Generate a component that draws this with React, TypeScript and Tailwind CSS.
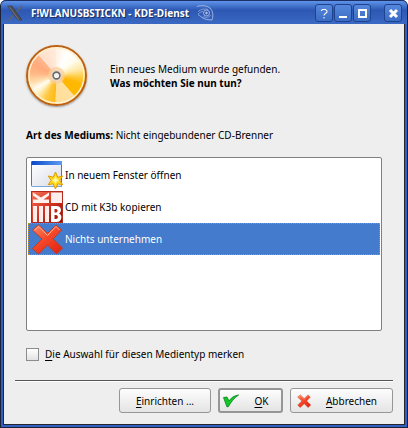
import { ReactNode, useState } from 'react';

interface Action {
  id: string;
  label: string;
  icon: ReactNode;
}

function XLogo() {
  return (
    <svg viewBox="0 0 16 16" className="size-4" aria-hidden="true">
      <path d="M.5 1h4.500l10 14h-4z" fill="#4c4e56" stroke="#353945" strokeWidth=".6" />
      <path d="M15 1 9.500 7M6.500 10 1.500 15.500" stroke="#5f626c" strokeWidth="1.800" fill="none" />
      <path d="M2 1.500 12 15" stroke="#75767c" strokeWidth="1" />
    </svg>
  );
}

function Swirl() {
  return (
    <svg viewBox="0 0 18 18" className="size-[18px]" fill="none" stroke="#9fb4e0" strokeWidth="1" aria-hidden="true">
      <path d="M0 2.500C4 1 10 1.500 13 4c3 3 3.500 8 2 12-4 0-8-1-10-2.500C3 12 2 11 1 10.500" />
      <path d="M1 7.500C4 5 8 4.500 11 5.500M1 10c2-2 4-2.500 5-2.500" stroke="#7f9bd4" />
      <circle cx="9.500" cy="9" r="3" />
      <circle cx="9.500" cy="9" r=".8" fill="#b9c9ea" stroke="#b9c9ea" />
      <path d="M6 12.500c3 1.500 6 1 8-1.500" stroke="#7f9bd4" />
    </svg>
  );
}

function Disc() {
  return (
    <div className="relative size-[61px] shrink-0 rounded-full border-2 border-[#bd6212] bg-[conic-gradient(#fff3e4_0deg,#ffffff_25deg,#fffdf0_50deg,#ffe9a8_75deg,#ffc93c_95deg,#ffb700_110deg,#ffb800_137deg,#ffe0a0_140deg,#ffdf98_181deg,#ffba18_184deg,#ffc840_205deg,#fff3c8_228deg,#fffdf4_238deg,#ffe0b0_252deg,#ffb886_275deg,#ffaa7a_295deg,#ffb68c_317deg,#ffdfca_320deg,#ffeadb_357deg,#fff3e4_360deg)] shadow-[0_1px_2px_#55555599]">
      <svg viewBox="0 0 57 57" className="size-full" fill="none" aria-hidden="true">
        <circle cx="28.500" cy="28.500" r="27.500" stroke="#fff0cf" strokeWidth="1.400" />
        <circle cx="28.500" cy="28.500" r="8.500" fill="#f9cf9a" fillOpacity=".75" />
        <circle cx="28.500" cy="28.500" r="5.500" fill="#ecd9c4" />
        <circle cx="28.500" cy="28.500" r="3.400" fill="#f2f2f2" stroke="#6a6a6c" strokeWidth="1.600" />
      </svg>
    </div>
  );
}

function WindowIcon() {
  return (
    <svg viewBox="0 0 32 32" className="size-8" aria-hidden="true">
      <defs>
        <linearGradient id="win-bar" x1="0" y1="0" x2="1" y2="0">
          <stop offset="0" stopColor="#0b49c6" />
          <stop offset="1" stopColor="#5c9cf4" />
        </linearGradient>
        <linearGradient id="win-body" x1="0" y1="0" x2="1" y2="1">
          <stop offset="0" stopColor="#ffffff" />
          <stop offset="1" stopColor="#d8dce8" />
        </linearGradient>
      </defs>
      <rect x=".5" y="2.500" width="30" height="25" rx="1" fill="url(#win-body)" stroke="#3c78d8" />
      <path d="M.5 2h30.500v4H.5z" fill="url(#win-bar)" />
      <path d="M1 27.500h30" stroke="#7ba6dc" />
      <path
        d="m24.500 13 2.200 5.200 5-1.200-3 4.300 3 4.400-5-.9-2.200 5.200-2.300-5.200-5 .9 3-4.400-3-4.300 5 1.200z"
        fill="#ffd91a"
        stroke="#e29a00"
        strokeWidth="1"
        strokeLinejoin="round"
      />
      <path d="m24.500 17 1.300 3 2.400 1.300-2.400 1.300-1.300 3-1.300-3-2.400-1.300 2.400-1.300z" fill="#fff9a0" />
    </svg>
  );
}

function K3bIcon() {
  return (
    <svg viewBox="0 0 32 32" className="size-8" aria-hidden="true">
      <defs>
        <linearGradient id="k3b-red" x1="0" y1="0" x2="1" y2="1">
          <stop offset="0" stopColor="#f8765c" />
          <stop offset=".5" stopColor="#d43422" />
          <stop offset="1" stopColor="#8e0800" />
        </linearGradient>
      </defs>
      <rect width="32" height="32" fill="url(#k3b-red)" />
      <path d="M2 12V8.500h5.500L2 4.500V1.500l8 5 8-5v3l-5.500 4H18V12z" fill="#fff1ee" />
      <path d="M20 1.500h11V12H20z" fill="#fbeeec" />
      <path d="M2 15h4v16H2zM8 15h4v16H8zM14 15h4v16h-4z" fill="#ffeee9" />
      <path
        d="M20 15h5.500c5.500 0 5.500 6 2.500 7.500 4 1.500 3 8.500-2.500 8.500H20zm3.500 3v3.500h1.500c2 0 2-3.500 0-3.500zm0 6v4h1.500c2.500 0 2.500-4 0-4z"
        fill="#ffffff"
        fillRule="evenodd"
      />
      <path d="M0 .5h32M.5 0v32M31.500 0v32M0 31.500h32" stroke="#b42a1c" />
    </svg>
  );
}

function CrossIcon({ className }: { className: string }) {
  return (
    <svg viewBox="0 0 32 32" className={className} aria-hidden="true">
      <defs>
        <linearGradient id="cross-red" x1="0" y1="0" x2=".8" y2="1">
          <stop offset="0" stopColor="#ff8a62" />
          <stop offset=".5" stopColor="#f4482a" />
          <stop offset="1" stopColor="#e42412" />
        </linearGradient>
      </defs>
      <path
        d="m1.500 7 6-5 9 8.500L25 2l5.500 5-8.500 9 9.500 9-6 6-9-9L7.500 31l-6-5.500 9.500-9.500z"
        fill="url(#cross-red)"
        stroke="#c03a24"
        strokeLinejoin="round"
      />
      <path d="m3.500 7 4.500-3.500 8.500 9L25 3.500 28.500 7" fill="none" stroke="#ffb59a" />
    </svg>
  );
}

function CheckIcon() {
  return (
    <svg viewBox="0 0 16 14" className="h-3.5 w-4 shrink-0" aria-hidden="true">
      <path
        d="M.5 3.500 4 3l2 4C8 4 11 1.500 15.500 1 11 4 8 8 5.500 12.500L4 13z"
        fill="#12c92a"
        stroke="#078018"
        strokeWidth=".8"
        strokeLinejoin="round"
      />
    </svg>
  );
}

const TITLE_BUTTONS = [
  { label: 'Hilfe', path: 'M5 5.500h1v-1h4v1h1v2h-1v1H9v1H8v1M8 12v1.500', width: 1, gap: 'mr-px' },
  { label: 'Minimieren', path: 'M4 12h8', width: 2, gap: 'mr-px' },
  { label: 'Maximieren', path: 'M5 5h7v7H5z', width: 2, gap: 'mr-[13px]' },
  { label: 'Schließen', path: 'm5 5 7 7M12 5l-7 7', width: 3, gap: '' },
];

const ACTIONS: Action[] = [
  { id: 'open', label: 'In neuem Fenster öffnen', icon: <WindowIcon /> },
  { id: 'copy', label: 'CD mit K3b kopieren', icon: <K3bIcon /> },
  { id: 'none', label: 'Nichts unternehmen', icon: <CrossIcon className="size-8" /> },
];

const BUTTON =
  'flex h-[25px] items-center rounded-[3px] border border-[#969696] bg-linear-to-b from-[#fdfdfd] to-[#e4e4e4]';

function TitleBar() {
  return (
    <header className="flex h-6 items-center rounded-t-[5px] border-t border-[#1c2f66] bg-linear-to-b from-[#5f94ea] via-[#2d57b2] via-40% to-[#3a69c4] pr-[5px] pl-1.5">
      <XLogo />
      <h1 className="mr-2 ml-2 text-[10px] font-bold whitespace-nowrap text-white [text-shadow:1px_1px_1px_#14285a]">
        F!WLANUSBSTICKN - KDE-Dienst
      </h1>
      <Swirl />
      <div className="ml-auto flex">
        {TITLE_BUTTONS.map((button) => (
          <button
            key={button.label}
            type="button"
            aria-label={button.label}
            className={`size-[18px] rounded-[3px] border border-[#1f428f] bg-linear-to-b from-[#5588dc] to-[#3c6cc4] ${button.gap}`}
          >
            <svg viewBox="0 0 16 16" className="size-full" fill="none" stroke="#ffffff" strokeWidth={button.width}>
              <path d={button.path} />
            </svg>
          </button>
        ))}
      </div>
    </header>
  );
}

export default function App() {
  const [selected, setSelected] = useState('none');
  const [remember, setRemember] = useState(false);

  return (
    <div className="flex min-h-screen flex-col rounded-t-[6px] border-x border-b border-[#1b2238] bg-[#2f5fc0] font-['Noto_Sans','Open_Sans',sans-serif] text-[10px] leading-[14px] text-black">
      <TitleBar />
      <main className="mx-0.5 mb-0.5 flex flex-1 flex-col border-x border-b border-[#26262c] bg-[#eeeeee] px-[11px] pb-[11px]">
        <div className="flex flex-1 flex-col px-[11px]">
          <div className="mt-[21px] flex items-center gap-[23px]">
            <Disc />
            <div>
              <p>Ein neues Medium wurde gefunden.</p>
              <p className="font-bold">Was möchten Sie nun tun?</p>
            </div>
          </div>

          <p className="mt-[22px] mb-[15px]">
            <b>Art des Mediums:</b> Nicht eingebundener CD-Brenner
          </p>

          <div
            role="listbox"
            aria-label="Aktionen"
            className="flex flex-1 flex-col rounded-[2px] border border-[#808080] bg-white p-px"
          >
            {ACTIONS.map((action) => (
              <button
                key={action.id}
                type="button"
                role="option"
                aria-selected={selected === action.id}
                onClick={() => setSelected(action.id)}
                className={`flex h-8 items-center gap-0.5 pl-[3px] text-left ${
                  selected === action.id
                    ? 'bg-[#447bcd] text-white outline-1 -outline-offset-1 outline-dotted outline-[#d08a20]'
                    : ''
                }`}
              >
                {action.icon}
                {action.label}
              </button>
            ))}
          </div>

          <label className="mt-4 mb-[19px] flex items-center gap-1.5">
            <input
              type="checkbox"
              checked={remember}
              onChange={(e) => setRemember(e.target.checked)}
              className="size-[13px] appearance-none border border-[#8c8c8c] bg-linear-to-b from-white to-[#e2e2e2] checked:bg-[#447bcd]"
            />
            <span>
              <u className="underline-offset-2">D</u>ie Auswahl für diesen Medientyp merken
            </span>
          </label>
        </div>

        <hr className="h-0.5 border-t border-b border-t-[#555555] border-b-white" />

        <div className="mt-1.5 flex justify-end gap-[7px]">
          <button type="button" className={`${BUTTON} w-[92px] justify-center`}>
            <span>
              <u className="underline-offset-2">E</u>inrichten ...
            </span>
          </button>
          <button type="button" className={`${BUTTON} w-[65px] gap-1.5 border-2 px-[3px]`}>
            <CheckIcon />
            <span className="flex-1">
              <u className="underline-offset-2">O</u>K
            </span>
          </button>
          <button type="button" className={`${BUTTON} w-[103px] gap-1.5 px-1.5`}>
            <CrossIcon className="size-3.5 shrink-0" />
            <span className="flex-1">
              <u className="underline-offset-2">A</u>bbrechen
            </span>
          </button>
        </div>
      </main>
    </div>
  );
}
